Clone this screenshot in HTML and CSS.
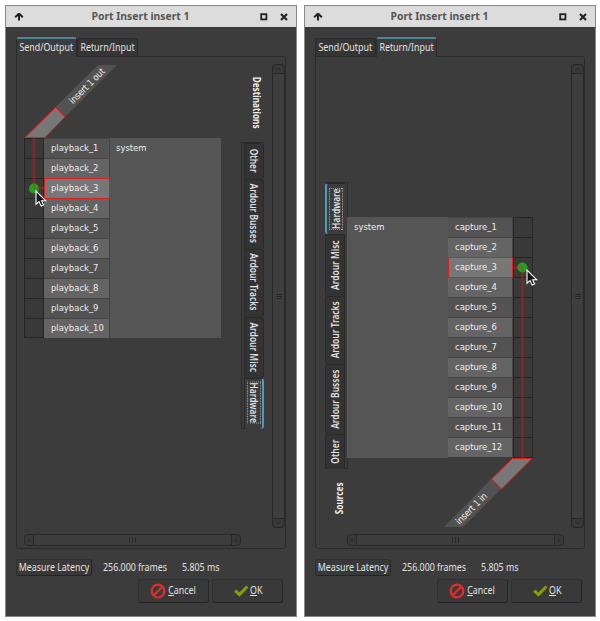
FILE: index.html
```html
<!DOCTYPE html>
<html lang="en">
<head>
<meta charset="utf-8">
<title>Port Insert insert 1</title>
<link rel="stylesheet" href="styles.css">
</head>
<body>
<svg width="0" height="0" class="defs">
  <symbol id="up" viewBox="0 0 10 10"><path d="M5 1.500 8.800 5.300M5 1.500 1.200 5.300M5 2V8.500" fill="none" stroke="#222" stroke-width="2"/></symbol>
  <symbol id="max" viewBox="0 0 8 8"><rect x="1.2" y="1.2" width="5.2" height="5.2" fill="none" stroke="#222" stroke-width="1.8"/></symbol>
  <symbol id="close" viewBox="0 0 8 8"><path d="M1 1 7 7M7 1 1 7" stroke="#222" stroke-width="2.1"/></symbol>
  <symbol id="no" viewBox="0 0 16 16"><circle cx="8" cy="8" r="6.3" fill="none" stroke="#de2d2d" stroke-width="2.3"/><path d="M12.3 3.7 3.7 12.3" stroke="#de2d2d" stroke-width="2.3"/></symbol>
  <symbol id="check" viewBox="0 0 16 14"><path d="M1 7.8 3.6 5.6 6.2 8.4 13.4 1.6 15.4 3.4 6.5 12.8Z" fill="#859e00"/></symbol>
  <symbol id="cursor" viewBox="0 0 12 17"><path d="M1 1V14.2L4 11.6 6.2 16 8.6 14.9 6.5 10.7H10.6Z" fill="#111" stroke="#fff" stroke-width="1.1"/></symbol>
</svg>
<main class="desk">
  <section class="window">
    <header class="title"><svg class="i-up"><use href="#up"/></svg><h1>Port Insert insert 1</h1><svg class="i-max"><use href="#max"/></svg><svg class="i-close"><use href="#close"/></svg></header>
    <div class="content">
      <nav class="tabs"><div class="tab on"><span class="n">Send/Output</span></div><div class="tab"><span class="n">Return/Input</span></div></nav>
      <div class="panel send">
        <div class="canvas">
          <div class="matrix">
            <ul class="cells"><li></li><li></li><li></li><li></li><li></li><li></li><li></li><li></li><li></li><li></li></ul>
            <ul class="ports"><li>playback_1</li><li>playback_2</li><li class="hit">playback_3</li><li>playback_4</li><li>playback_5</li><li>playback_6</li><li>playback_7</li><li>playback_8</li><li>playback_9</li><li>playback_10</li></ul>
            <div class="client">system</div>
          </div>
          <svg class="overlay" viewBox="24 64 217 464">
            <path d="M54.500 108 98 65H117L65 117Z" fill="#525252"/>
            <path d="M25 137.500H45L65 117 55.500 107.500Z" fill="#777" stroke="#e01c1c"/>
            <path d="M34 138V188H44" fill="none" stroke="#b91c1c" stroke-opacity=".6" stroke-width="2.500"/>
            <circle cx="34" cy="188.500" r="5" fill="#22a022"/>
            <path d="M34 184V188.500H39" fill="none" stroke="#8a5a18" stroke-opacity=".6" stroke-width="2"/>
            <text transform="translate(73 104.500) rotate(-45)" textLength="46">insert 1 out</text>
            <use href="#cursor" x="35" y="190" width="12" height="17"/>
          </svg>
        </div>
        <aside class="side">
          <div class="sidehead"><b>Destinations</b></div>
          <div class="vtabs"><div class="v h36"><span>Other</span></div><div class="v h71"><span>Ardour Busses</span></div><div class="v h68"><span>Ardour Tracks</span></div><div class="v h61"><span>Ardour Misc</span></div><div class="v h51 on"><span>Hardware</span></div></div>
        </aside>
        <div class="vbar"><i>‹</i><em></em><i>›</i></div>
        <div class="hbar"><i>‹</i><em></em><i>›</i></div>
      </div>
      <div class="latency"><button class="measure"><span class="n">Measure Latency</span></button><span class="frames n">256.000 frames</span><span class="ms n">5.805 ms</span></div>
      <div class="actions"><button><svg class="i-no"><use href="#no"/></svg><span class="n"><u>C</u>ancel</span></button><button class="ok"><svg class="i-check"><use href="#check"/></svg><span class="n"><u>O</u>K</span></button></div>
    </div>
  </section>

  <section class="window">
    <header class="title"><svg class="i-up"><use href="#up"/></svg><h1>Port Insert insert 1</h1><svg class="i-max"><use href="#max"/></svg><svg class="i-close"><use href="#close"/></svg></header>
    <div class="content">
      <nav class="tabs"><div class="tab"><span class="n">Send/Output</span></div><div class="tab on"><span class="n">Return/Input</span></div></nav>
      <div class="panel return">
        <aside class="side">
          <div class="vtabs"><div class="v h51 on"><span>Hardware</span></div><div class="v h61"><span>Ardour Misc</span></div><div class="v h68"><span>Ardour Tracks</span></div><div class="v h71"><span>Ardour Busses</span></div><div class="v h36"><span>Other</span></div></div>
          <div class="sidehead"><b>Sources</b></div>
        </aside>
        <div class="canvas">
          <div class="matrix">
            <div class="client">system</div>
            <ul class="ports"><li>capture_1</li><li>capture_2</li><li class="hit">capture_3</li><li>capture_4</li><li>capture_5</li><li>capture_6</li><li>capture_7</li><li>capture_8</li><li>capture_9</li><li>capture_10</li><li>capture_11</li><li>capture_12</li></ul>
            <ul class="cells"><li></li><li></li><li></li><li></li><li></li><li></li><li></li><li></li><li></li><li></li><li></li><li></li></ul>
          </div>
          <svg class="overlay" viewBox="347 64 217 464">
            <path d="M491 479 444 527H463L501 489Z" fill="#525252"/>
            <path d="M512.500 458.500H532L501.500 489 491.500 479Z" fill="#777" stroke="#e01c1c"/>
            <path d="M522.500 458V267.500H513" fill="none" stroke="#b91c1c" stroke-opacity=".6" stroke-width="2.500"/>
            <circle cx="522.500" cy="267.500" r="5" fill="#22a022"/>
            <path d="M517 267.500H522.500V272" fill="none" stroke="#8a5a18" stroke-opacity=".6" stroke-width="2"/>
            <text transform="translate(459.500 525) rotate(-45)" textLength="40">insert 1 in</text>
            <use href="#cursor" x="526" y="269" width="12" height="17"/>
          </svg>
        </div>
        <div class="vbar"><i>‹</i><em></em><i>›</i></div>
        <div class="hbar"><i>‹</i><em></em><i>›</i></div>
      </div>
      <div class="latency"><button class="measure"><span class="n">Measure Latency</span></button><span class="frames n">256.000 frames</span><span class="ms n">5.805 ms</span></div>
      <div class="actions"><button><svg class="i-no"><use href="#no"/></svg><span class="n"><u>C</u>ancel</span></button><button class="ok"><svg class="i-check"><use href="#check"/></svg><span class="n"><u>O</u>K</span></button></div>
    </div>
  </section>
</main>
</body>
</html>
```
FILE: styles.css
```css
* { box-sizing: border-box; margin: 0; padding: 0; }
body { background: #fff; font: 10.3px/14px "Noto Sans", sans-serif; color: #e2e2e2; overflow: hidden; }
ul { list-style: none; }
svg { flex: none; display: block; }
.defs { position: absolute; }
.desk { display: flex; gap: 7px; padding: 5px 0 0 5px; }
.window { width: 292px; height: 612px; border: 1px solid #888; background: #3c3c3c; }
.title { height: 21px; display: flex; align-items: center; background: #dcdcdc; padding: 0 8px; }
.title h1 { flex: 1; text-align: center; font: bold 10.4px/18px "Noto Sans", sans-serif; color: #555; padding: 0 2px 2px 0; white-space: nowrap; }
.i-up { width: 10px; height: 10px; margin-right: -1px; }
.i-max { width: 8px; height: 8px; margin-right: 12px; }
.i-close { width: 8px; height: 8px; }
.content { padding: 10px 10px 0; }
.n { display: inline-block; white-space: nowrap; transform: scaleX(.86); }

.tabs { display: flex; align-items: flex-end; height: 19px; }
.tab { width: 61px; height: 18px; display: flex; justify-content: center; align-items: center; background: #353535; border: 1px solid #2b2b2b; border-bottom: 0; border-radius: 3px 3px 0 0; padding-bottom: 1px; }
.tab.on { height: 20px; margin-bottom: -1px; padding-bottom: 2px; background: #3c3c3c; border-top: 2px solid #4c8798; position: relative; z-index: 1; }
.tab .n { margin: 0 -10px; }

.panel { width: 270px; height: 493px; border: 1px solid #2b2b2b; border-radius: 0 3px 3px 3px; padding-top: 7px; display: grid; grid-template-rows: 464px 12px; row-gap: 6px; }
.send { grid-template-columns: 217px 31px 13px; padding-left: 7px; }
.return { grid-template-columns: 31px 217px 14px; padding-left: 0; }
.return .vbar { width: 13px; margin-left: 7px; }
.return .hbar { grid-column: 2; }
.canvas { position: relative; width: 217px; }
.matrix { display: flex; width: 197px; margin-top: 74px; height: 200px; }
.return .matrix { margin-top: 153px; height: 241px; width: 186px; }
.overlay { position: absolute; inset: 0; width: 217px; height: 464px; }
.overlay text, .matrix { font-family: "DejaVu Sans Condensed", "DejaVu Sans", sans-serif; font-stretch: condensed; font-size: 9.4px; fill: #eee; color: #eee; }
.cells { width: 20px; border-right: 1px solid #282828; border-bottom: 1px solid #252525; }
.cells li { height: 20px; border-top: 1px solid #252525; border-left: 1px solid #252525; background: #393939; }
.send .cells li:last-child { height: 19px; }
.ports { width: 65px; }
.ports li { height: 20px; padding-left: 7px; line-height: 18px; background: #535353; border-top: 1px solid #444; border-right: 1px solid #444; }
.ports li:nth-child(even) { background: #646464; }
.ports li.hit { background: #777; height: 21px; margin-bottom: -1px; border: 1px solid #d92020; padding-left: 6px; position: relative; }
.send .ports { width: 66px; }
.client { flex: 1; background: #555; padding: 1px 0 0 7px; line-height: 18px; }
.send .client { padding-left: 6px; }

.side { display: flex; flex-direction: column; }
.sidehead { height: 78px; display: flex; align-items: center; justify-content: center; padding-left: 1px; }
.sidehead b { writing-mode: vertical-rl; font-size: 10px; line-height: 14px; transform: scaleY(.82); color: #eee; }
.vtabs { width: 23px; height: 287px; border: 1px solid #2b2b2b; border-right: 0; padding-left: 2px; }
.v { width: 20px; display: flex; align-items: center; justify-content: center; background: #333; border: 1px solid #292929; border-bottom: 0; border-radius: 0 3px 3px 0; }
.v span { writing-mode: vertical-rl; white-space: nowrap; font-weight: 600; line-height: 12px; transform: translateY(-1px) scaleY(.82); margin: -10px 0; }
.v.on { background: #3c3c3c; border-right: 2px solid #4c9cbd; }
.v.on span { outline: 1px dotted #aaa; }
.h36 { height: 35.500px; } .h71 { height: 70px; } .h68 { height: 68px; } .h61 { height: 61.500px; } .h51 { height: 51px; }
.return .vtabs { margin: 118px 0 0 9px; padding: 0 2px 0 0; border-right: 1px solid #2b2b2b; border-left: 0; }
.return .v { border-radius: 3px 0 0 3px; }
.return .v.on { border-right: 0; border-left: 2px solid #4c9cbd; }
.return .v span { transform: rotate(180deg) scaleY(.82); }
.return .sidehead { height: 59px; padding-left: 14px; }
.return .sidehead b { transform: rotate(180deg) scaleY(.82); }

.vbar, .hbar { display: flex; border: 1px solid #272727; border-radius: 4px; background: #393939; }
.vbar { flex-direction: column; width: 13px; }
.vbar i, .hbar i { font: normal 9px/9px "DejaVu Sans", sans-serif; color: #222; display: flex; align-items: center; justify-content: center; width: 8px; flex: none; }
.vbar i { width: 11px; height: 8px; transform: rotate(90deg); }
.vbar em, .hbar em { flex: 1; border: 0 solid #272727; border-width: 0 1px; background: linear-gradient(#272727, #272727) center/1px 6px no-repeat, linear-gradient(#272727, #272727) calc(50% - 3px) center/1px 6px no-repeat, linear-gradient(#272727, #272727) calc(50% + 3px) center/1px 6px no-repeat, #3e3e3e; }
.vbar em { border-width: 1px 0; background: linear-gradient(#272727, #272727) center/6px 1px no-repeat, linear-gradient(#272727, #272727) center calc(50% - 2px)/6px 1px no-repeat, linear-gradient(#272727, #272727) center calc(50% + 2px)/6px 1px no-repeat, #3e3e3e; }

button { font: inherit; color: inherit; display: flex; align-items: center; justify-content: center; width: 71px; height: 24px; background: #393939; border: 1px solid #303030; border-bottom-color: #232323; border-right-color: #262626; border-radius: 3px; }
.latency { display: flex; align-items: center; height: 17px; margin-top: 10px; }
.latency .n { position: relative; top: -1px; }
.measure { width: 76px; height: 17px; }
.frames, .ms { transform-origin: left; }
.frames { width: 79px; margin-left: 11px; }
.actions { display: flex; gap: 3px; justify-content: flex-end; margin-top: 3px; padding-right: 3px; }
.actions button { padding-left: 2px; }
.actions .n { position: relative; top: -1px; }
.i-no { width: 16px; height: 16px; }
.i-check { width: 16px; height: 14px; }
```
